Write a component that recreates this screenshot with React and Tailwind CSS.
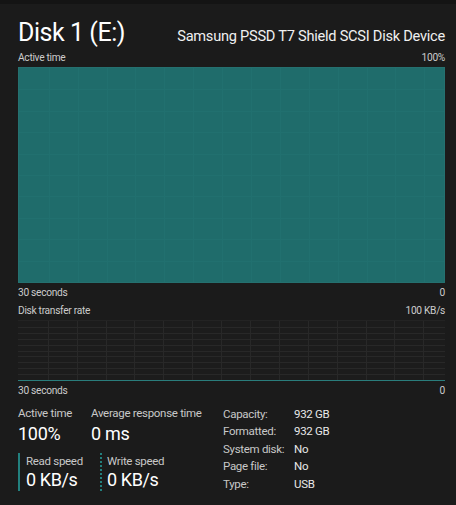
import React from 'react';

const font = { fontFamily: 'Roboto, "Noto Sans", sans-serif' };

// faint grid drawn over the charts
const Grid = ({ h, rows, line, fill }) => {
  const w = 427;
  const xs = Array.from({ length: 14 }, (_, i) => 29.7 + i * 28.9);
  const ys = Array.from({ length: rows - 1 }, (_, i) => ((i + 1) * h) / rows);
  return (
    <svg width={w} height={h} className="block">
      <rect x="0" y="0" width={w} height={h} fill={fill} />
      {ys.map((y) => (
        <line key={'h' + y} x1="0" x2={w} y1={Math.round(y) + 0.5} y2={Math.round(y) + 0.5} stroke={line} strokeWidth="1" />
      ))}
      {xs.map((x) => (
        <line key={'v' + x} x1={Math.round(x) + 0.5} x2={Math.round(x) + 0.5} y1="0" y2={h} stroke={line} strokeWidth="1" />
      ))}
    </svg>
  );
};

const Row = ({ left, right, className = '' }) => (
  <div className={`flex justify-between items-center text-[10.2px] tracking-[-0.3px] text-[#cccccc] ${className}`}>
    <span>{left}</span>
    <span>{right}</span>
  </div>
);

const Info = ({ label, value }) => (
  <div className="flex h-[17.4px] items-center text-[11.5px] tracking-[-0.3px]">
    <span className="w-[71px] text-[#c8c8c8]">{label}</span>
    <span className="text-[#e8e8e8]">{value}</span>
  </div>
);

export default function App() {
  return (
    <div className="w-[456px] h-[505px] bg-[#1b1b1b] border-t-4 border-[#141414] pl-[18px] pr-[11px] text-white" style={font}>
      {/* Header */}
      <div className="flex justify-between items-baseline h-[43px] pt-[10px]">
        <h1 className="text-[25px] font-normal tracking-[-0.45px] text-white">Disk 1 (E:)</h1>
        <span className="text-[14.6px] tracking-[-0.25px] text-[#f0f0f0]">Samsung PSSD T7 Shield SCSI Disk Device</span>
      </div>

      <Row left="Active time" right="100%" className="h-[20px] pt-[1px]" />
      <div className="h-[216px] border border-[#25706f] overflow-hidden">
        <Grid h={214} rows={10} line="#21706f" fill="#1f6c6b" />
      </div>
      <Row left="30 seconds" right="0" className="h-[19px]" />

      <Row left="Disk transfer rate" right="100 KB/s" className="h-[18px]" />
      <div className="h-[61px] border-t border-[#232323] border-b border-b-[#2a7d7c] overflow-hidden">
        <Grid h={59} rows={10} line="#282828" fill="#1c1c1c" />
      </div>
      <Row left="30 seconds" right="0" className="h-[19px]" />

      {/* Stats */}
      <div className="flex mt-[5px]">
        <div className="w-[205px]">
          <div className="flex">
            <div className="w-[73px]">
              <div className="text-[11.5px] tracking-[-0.3px] text-[#c8c8c8] leading-[16px]">Active time</div>
              <div className="text-[18px] tracking-[-0.3px] leading-[26px] text-white">100%</div>
            </div>
            <div>
              <div className="text-[11.5px] tracking-[-0.3px] text-[#c8c8c8] leading-[16px]">Average response time</div>
              <div className="text-[18px] tracking-[-0.3px] leading-[26px] text-white">0 ms</div>
            </div>
          </div>
          <div className="flex mt-[6px]">
            <div className="w-[82px] border-l-2 border-[#22807e] pl-[6px] h-[38px]">
              <div className="text-[11.5px] tracking-[-0.3px] text-[#c8c8c8] leading-[14px] mt-[1px]">Read speed</div>
              <div className="text-[18px] tracking-[-0.4px] leading-[24px] text-white">0 KB/s</div>
            </div>
            <div className="border-l-2 border-dotted border-[#22807e] pl-[5px] h-[38px]">
              <div className="text-[11.5px] tracking-[-0.3px] text-[#c8c8c8] leading-[14px] mt-[1px]">Write speed</div>
              <div className="text-[18px] tracking-[-0.4px] leading-[24px] text-white">0 KB/s</div>
            </div>
          </div>
        </div>
        <div className="pt-[1px]">
          <Info label="Capacity:" value="932 GB" />
          <Info label="Formatted:" value="932 GB" />
          <Info label="System disk:" value="No" />
          <Info label="Page file:" value="No" />
          <Info label="Type:" value="USB" />
        </div>
      </div>
    </div>
  );
}
